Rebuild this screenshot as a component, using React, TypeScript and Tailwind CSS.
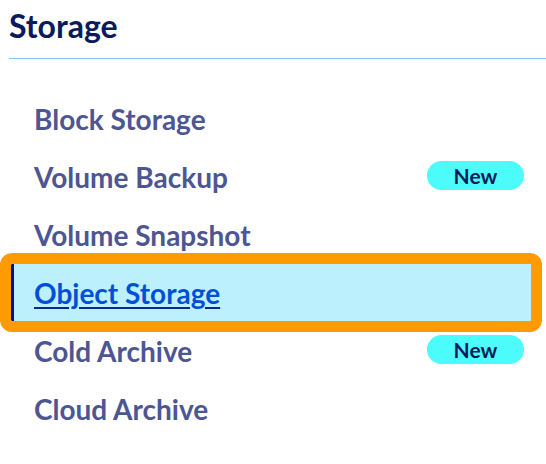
import React from "react";

const items = [
  { label: "Block Storage" },
  { label: "Volume Backup", isNew: true },
  { label: "Volume Snapshot" },
  { label: "Object Storage", active: true },
  { label: "Cold Archive", isNew: true },
  { label: "Cloud Archive" },
];

const NewBadge = () => (
  <span className="mb-[3px] flex h-[29px] w-[97px] items-center justify-center rounded-full bg-[#4cfcfa] text-[21px] font-bold leading-none text-[#0b1a5b]">
    New
  </span>
);

export default function App() {
  return (
    <div className="h-[464px] w-[546px] overflow-hidden bg-white font-['Lato',sans-serif]">
      <h2 className="pl-[9px] pt-[8px] text-[32px] font-bold leading-[36px] text-[#0b1a5b]">
        Storage
      </h2>
      <div className="ml-[9px] mt-[14px] border-t border-[#85c8f5]" />

      <ul className="ml-[11px] mt-[31px] w-[520px]">
        {items.map((item) => (
          <li
            key={item.label}
            className={
              item.active
                ? "flex h-[57px] mb-[1px] items-center justify-between rounded-[1px] border-l-[3px] border-[#000e9c] bg-[#bdf0fd] pl-[20px] pr-[7px] outline outline-[11px] outline-[#ff9a00]"
                : "flex h-[58px] items-center justify-between pl-[23px] pr-[7px]"
            }
          >
            {item.active ? (
              <a
                href="#"
                className="text-[28px] font-bold leading-none text-[#0050d7] underline decoration-[#0b2a8c] decoration-[2px] underline-offset-[3px]"
              >
                {item.label}
              </a>
            ) : (
              <span className="text-[28px] font-bold leading-none text-[#4d5593]">
                {item.label}
              </span>
            )}
            {item.isNew && <NewBadge />}
          </li>
        ))}
      </ul>
    </div>
  );
}
